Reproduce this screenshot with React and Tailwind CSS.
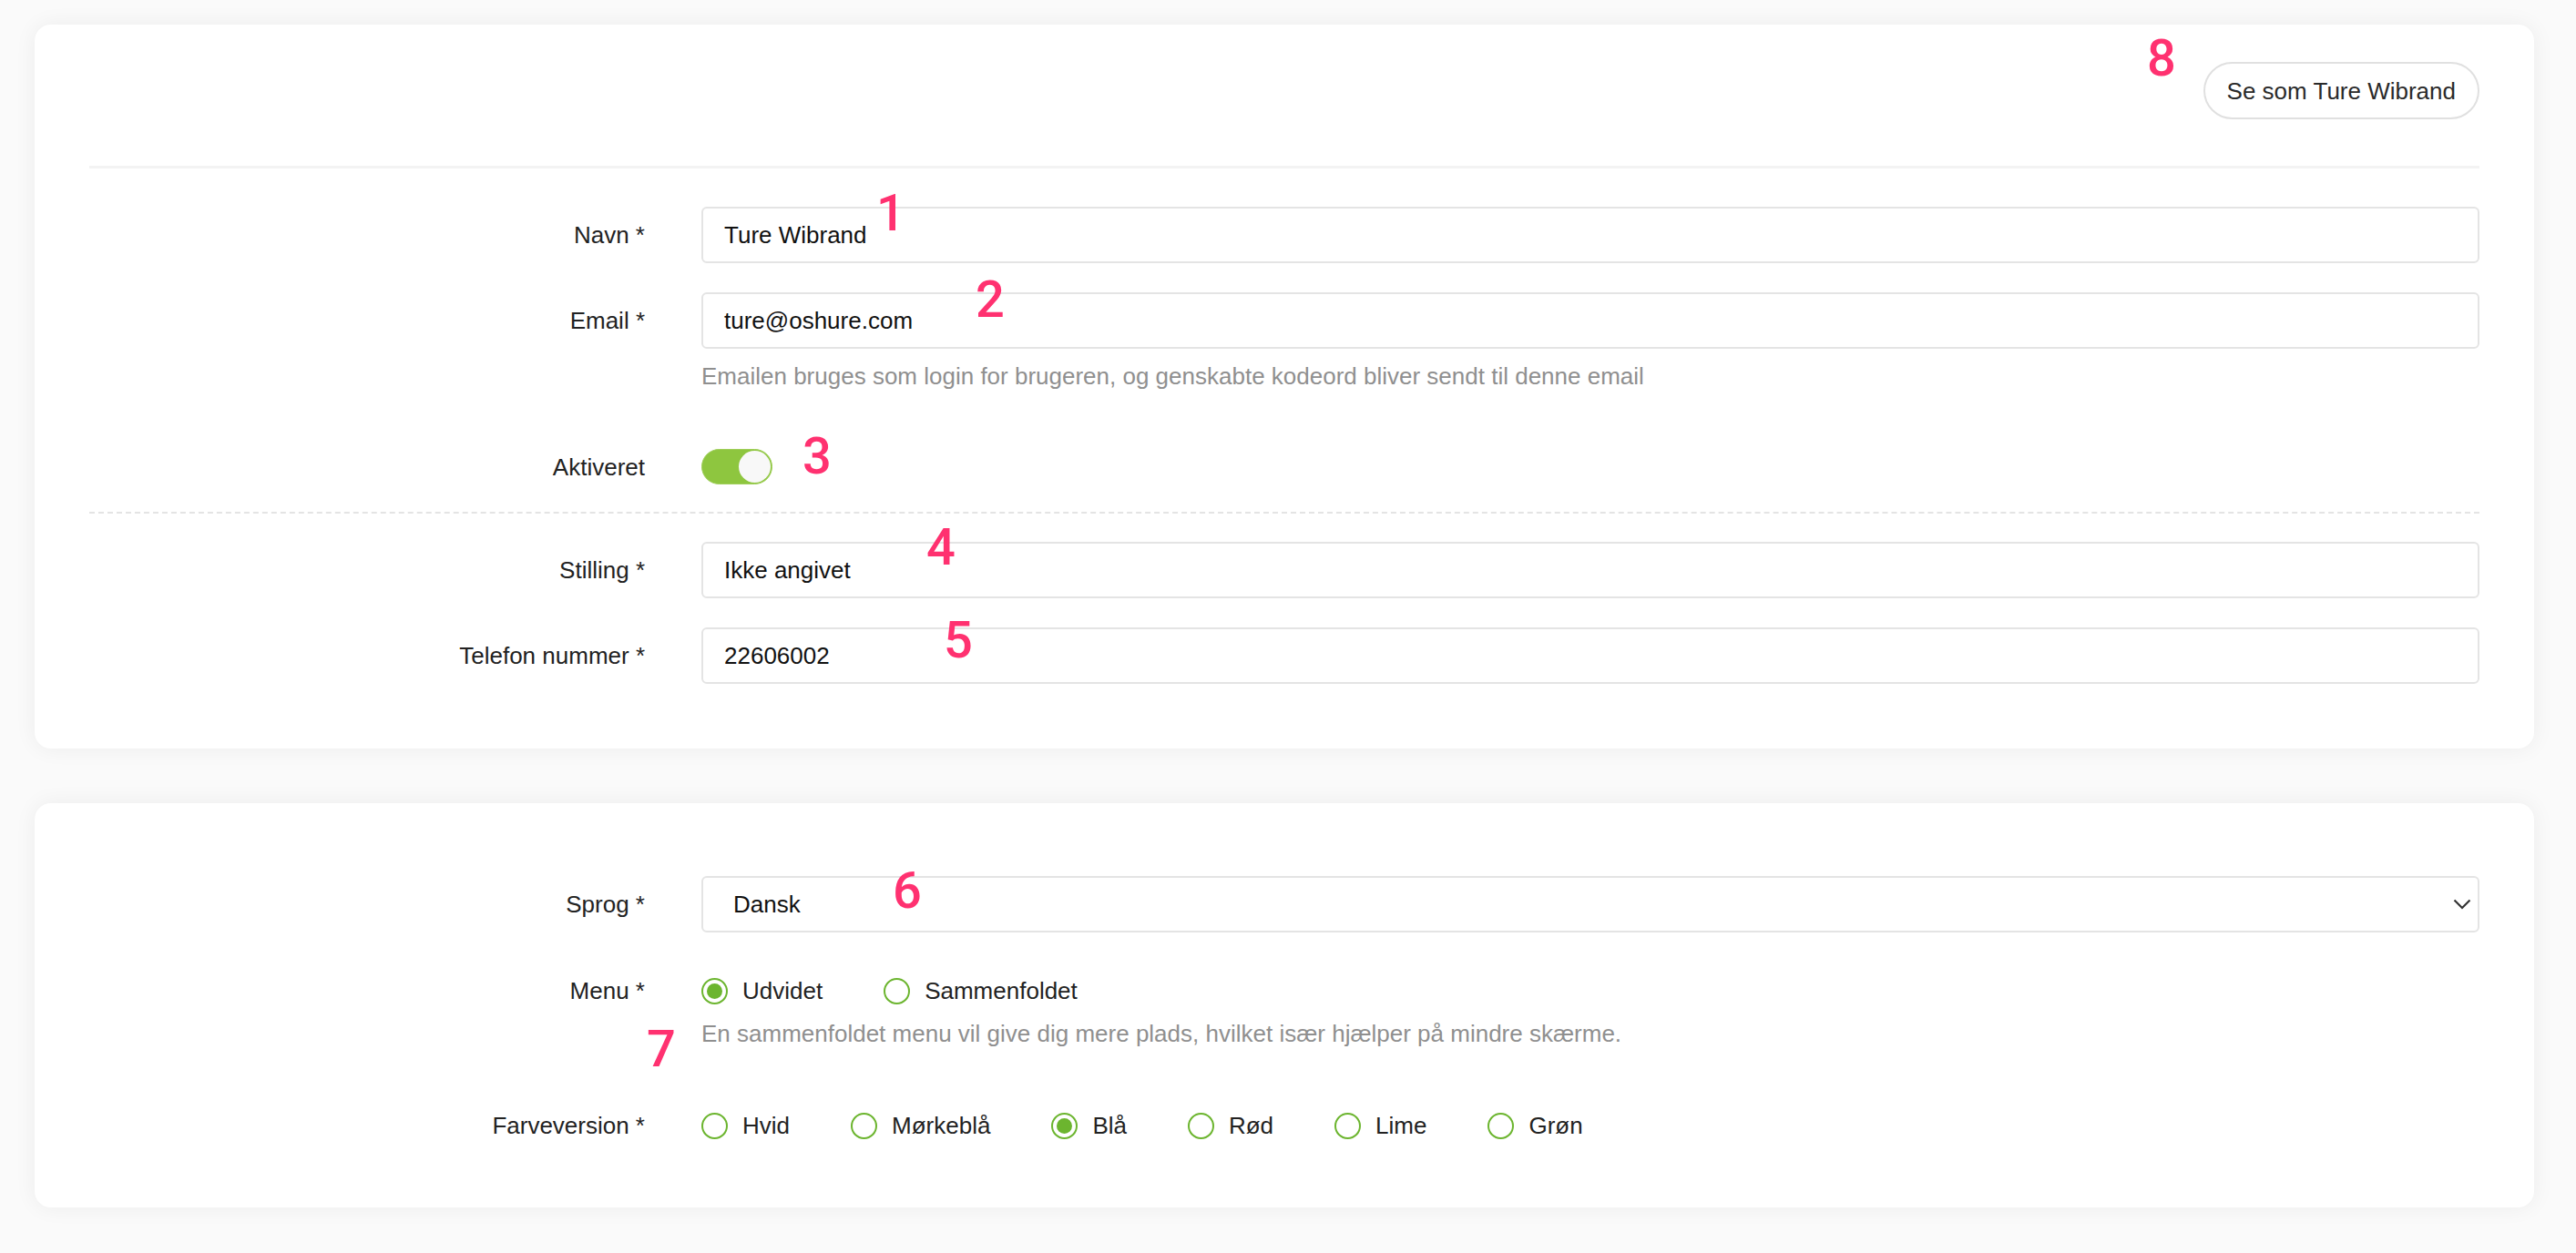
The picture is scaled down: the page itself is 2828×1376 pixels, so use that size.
import React from "react";

function Label({ children }) {
  return (
    <div className="w-[610px] shrink-0 pr-0 text-right text-[26px] text-[#222222]">
      {children}
    </div>
  );
}

function TextInput({ value }) {
  return (
    <div className="flex h-[62px] flex-1 items-center rounded-[6px] border-2 border-[#e4e4e4] bg-white px-[23px] text-[26px] text-[#111111]">
      {value}
    </div>
  );
}

function Row({ label, children, className = "" }) {
  return (
    <div className={"flex items-center gap-[62px] " + className}>
      <Label>{label}</Label>
      {children}
    </div>
  );
}

function Radio({ checked, label }) {
  return (
    <div className="mr-[67px] flex items-center gap-[16px]">
      <span className="flex h-[29px] w-[29px] items-center justify-center rounded-full border-[2.5px] border-[#6cb52f] bg-white">
        {checked && <span className="h-[17px] w-[17px] rounded-full bg-[#6cb52f]" />}
      </span>
      <span className="text-[26px] text-[#222222]">{label}</span>
    </div>
  );
}

function Helper({ children, className = "" }) {
  return (
    <div className={"flex " + className}>
      <div className="w-[672px] shrink-0" />
      <div className="text-[26px] leading-[36px] text-[#8f8f8f]">{children}</div>
    </div>
  );
}

function Mark({ n, className }) {
  return (
    <span
      className={
        "absolute font-['Roboto',sans-serif] text-[56px] font-medium leading-none text-[#ff3170] " + className
      }
    >
      {n}
    </span>
  );
}

export default function App() {
  return (
    <div className="relative min-h-[1376px] bg-[#fafafa] pb-[50px] pl-[38px] pr-[46px] pt-[27px] font-['Liberation_Sans',Arial,sans-serif] leading-[36px]">
      {/* Card 1 */}
      <div className="rounded-[18px] bg-white px-[60px] pb-[71px] pt-[41px] shadow-[0_0_24px_rgba(0,0,0,0.06)]">
        <div className="flex justify-end">
          <button className="h-[63px] rounded-full border-2 border-[#e0e0e0] bg-white px-[24px] text-[26px] text-[#2a2a2a]">
            Se som Ture Wibrand
          </button>
        </div>
        <div className="mt-[51px] h-[3px] bg-[#f3f3f3]" />

        <Row label="Navn *" className="mt-[42px]">
          <TextInput value="Ture Wibrand" />
        </Row>
        <Row label="Email *" className="mt-[32px]">
          <TextInput value="ture@oshure.com" />
        </Row>
        <Helper className="mt-[12px]">
          Emailen bruges som login for brugeren, og genskabte kodeord bliver sendt til denne email
        </Helper>

        <Row label="Aktiveret" className="mt-[62px]">
          <div className="flex h-[39px] w-[78px] items-center justify-end rounded-full border border-[#9fcf5a] bg-[#8ec63f] px-[1px]">
            <span className="h-[35px] w-[35px] rounded-full bg-[#f8f8f8]" />
          </div>
        </Row>

        <div className="mt-[30px] border-t-2 border-dashed border-[#e4e4e4]" />

        <Row label="Stilling *" className="mt-[31px]">
          <TextInput value="Ikke angivet" />
        </Row>
        <Row label="Telefon nummer *" className="mt-[32px]">
          <TextInput value="22606002" />
        </Row>
      </div>

      {/* Card 2 */}
      <div className="mt-[60px] rounded-[18px] bg-white px-[60px] pb-[72px] pt-[80px] shadow-[0_0_24px_rgba(0,0,0,0.06)]">
        <Row label="Sprog *">
          <div className="flex h-[62px] flex-1 items-center justify-between rounded-[6px] border-2 border-[#e4e4e4] bg-white pl-[33px] pr-[7px] text-[26px] text-[#111111]">
            <span>Dansk</span>
            <svg width="20" height="12" viewBox="0 0 20 12" fill="none">
              <polyline points="1.5,1.5 10,10 18.5,1.5" stroke="#333333" strokeWidth="2.2" />
            </svg>
          </div>
        </Row>

        <Row label="Menu *" className="mt-[46px]">
          <div className="flex flex-1 items-center">
            <Radio checked label="Udvidet" />
            <Radio label="Sammenfoldet" />
          </div>
        </Row>
        <Helper className="mt-[11px]">
          En sammenfoldet menu vil give dig mere plads, hvilket især hjælper på mindre skærme.
        </Helper>

        <Row label="Farveversion *" className="mt-[65px]">
          <div className="flex flex-1 items-center">
            <Radio label="Hvid" />
            <Radio label="Mørkeblå" />
            <Radio checked label="Blå" />
            <Radio label="Rød" />
            <Radio label="Lime" />
            <Radio label="Grøn" />
          </div>
        </Row>
      </div>

      <Mark n="1" className="left-[962px] top-[206px]" />
      <Mark n="2" className="left-[1071px] top-[301px]" />
      <Mark n="3" className="left-[881px] top-[473px]" />
      <Mark n="4" className="left-[1017px] top-[573px]" />
      <Mark n="5" className="left-[1036px] top-[675px]" />
      <Mark n="6" className="left-[980px] top-[950px]" />
      <Mark n="7" className="left-[710px] top-[1124px]" />
      <Mark n="8" className="left-[2357px] top-[36px]" />
    </div>
  );
}
